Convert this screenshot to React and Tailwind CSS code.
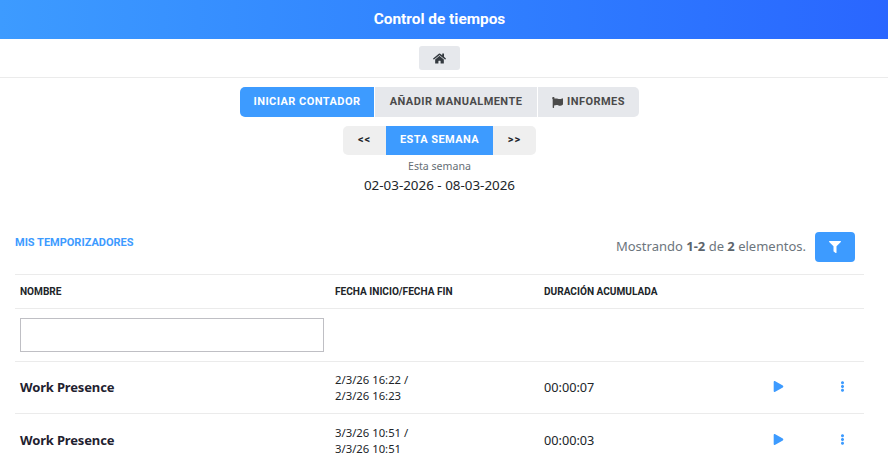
import React from 'react';
import { FaHome, FaFlag, FaFilter, FaPlay, FaEllipsisV } from 'react-icons/fa';

const rows = [
  { name: 'Work Presence', start: '2/3/26 16:22 /', end: '2/3/26 16:23', total: '00:00:07' },
  { name: 'Work Presence', start: '3/3/26 10:51 /', end: '3/3/26 10:51', total: '00:00:03' },
];

const App = () => {
  return (
    <div className="h-[476px] overflow-hidden bg-white font-['Noto_Sans',sans-serif] text-[#212529]">
      {/* Title bar */}
      <div className="h-[39px] pr-[9px] flex items-center justify-center bg-gradient-to-r from-[#3d9bff] to-[#2a66ff]">
        <h1 className="font-['Roboto',sans-serif] text-[15.4px] font-bold text-white">Control de tiempos</h1>
      </div>

      {/* Home */}
      <div className="h-[39px] pr-[9px] flex justify-center pt-[7px] border-b border-[#ebebeb]">
        <button className="w-[41px] h-[24px] flex items-center justify-center rounded-[3px] bg-[#e6e8ec] text-[#343a40]">
          <FaHome size={13} />
        </button>
      </div>

      {/* Tabs */}
      <div className="w-[879px] flex flex-col items-center pt-[9px]">
        <div className="flex gap-[1px] h-[30px] font-['Roboto',sans-serif] text-[11px] font-bold tracking-[0.45px]">
          <button className="w-[134px] rounded-l-[5px] bg-[#3d9bff] text-white">INICIAR CONTADOR</button>
          <button className="w-[162px] bg-[#e6e8ec] text-[#4a4a4a]">AÑADIR MANUALMENTE</button>
          <button className="w-[101px] flex items-center justify-center gap-[4px] rounded-r-[5px] bg-[#e6e8ec] text-[#4a4a4a]">
            <FaFlag size={11} /> INFORMES
          </button>
        </div>

        <div className="flex h-[29px] mt-[9px] font-['Roboto',sans-serif] text-[11px] font-bold tracking-[0.4px]">
          <button className="w-[43px] rounded-l-[5px] bg-[#efefef] text-[#212529] tracking-[1px]">&lt;&lt;</button>
          <button className="w-[107px] bg-[#3d9bff] text-white">ESTA SEMANA</button>
          <button className="w-[43px] rounded-r-[5px] bg-[#efefef] text-[#212529] tracking-[1px]">&gt;&gt;</button>
        </div>

        <p className="mt-[3px] text-[10.6px] leading-[16px] text-[#666e75]">Esta semana</p>
        <p className="mt-[2px] text-[13.4px] leading-[18px] text-[#212529]">02-03-2026 - 08-03-2026</p>
      </div>

      {/* Timers */}
      <div className="mx-[15px] mt-[36px]">
        <div className="h-[42px] flex items-start justify-between">
          <h2 className="font-['Roboto',sans-serif] text-[11px] font-bold leading-[14px] text-[#3d9bff] mt-[6px]">MIS TEMPORIZADORES</h2>
          <div className="flex items-center gap-[9px] mr-[18px] mt-[2px]">
            <span className="text-[13px] text-[#6c757d]">
              Mostrando <b className="text-[#5c646b]">1-2</b> de <b className="text-[#5c646b]">2</b> elementos.
            </span>
            <button className="w-[40px] h-[30px] flex items-center justify-center rounded-[4px] bg-[#3d9bff] text-white">
              <FaFilter size={12} />
            </button>
          </div>
        </div>

        <table className="w-[849px] mt-[2px] table-fixed border-collapse">
          <thead>
            <tr className="h-[34px] border-y border-[#ebebeb] text-left font-['Roboto',sans-serif] text-[10.1px] font-bold">
              <th className="w-[316px] pl-[5px]">NOMBRE</th>
              <th className="w-[209px] pl-[4px]">FECHA INICIO/FECHA FIN</th>
              <th className="w-[210px] pl-[4px]">DURACIÓN ACUMULADA</th>
              <th className="w-[65px]"></th>
              <th></th>
            </tr>
          </thead>
          <tbody>
            <tr className="h-[53px] border-b border-[#ebebeb]">
              <td className="pl-[5px]">
                <input className="block w-[304px] h-[34px] border border-[#bfbfc4] bg-white" />
              </td>
              <td colSpan={4}></td>
            </tr>
            {rows.map((row, i) => (
              <tr key={i} className="h-[52px] last:h-[54px] border-b border-[#ebebeb] last:border-b-transparent">
                <td className="pl-[5px] text-[13px] font-bold text-[#1f2230] tracking-[-0.15px]">{row.name}</td>
                <td className="pl-[4px] text-[11.3px] leading-[16px]">
                  {row.start}
                  <br />
                  {row.end}
                </td>
                <td className="pl-[4px] text-[12.7px]">{row.total}</td>
                <td className="pl-[23px] text-[#3d9bff]"><FaPlay size={11} className="-mt-[3px]" /></td>
                <td className="pl-[22px] text-[#3d9bff]"><FaEllipsisV size={11} className="-mt-[3px]" /></td>
              </tr>
            ))}
          </tbody>
        </table>
      </div>
    </div>
  );
};

export default App;
